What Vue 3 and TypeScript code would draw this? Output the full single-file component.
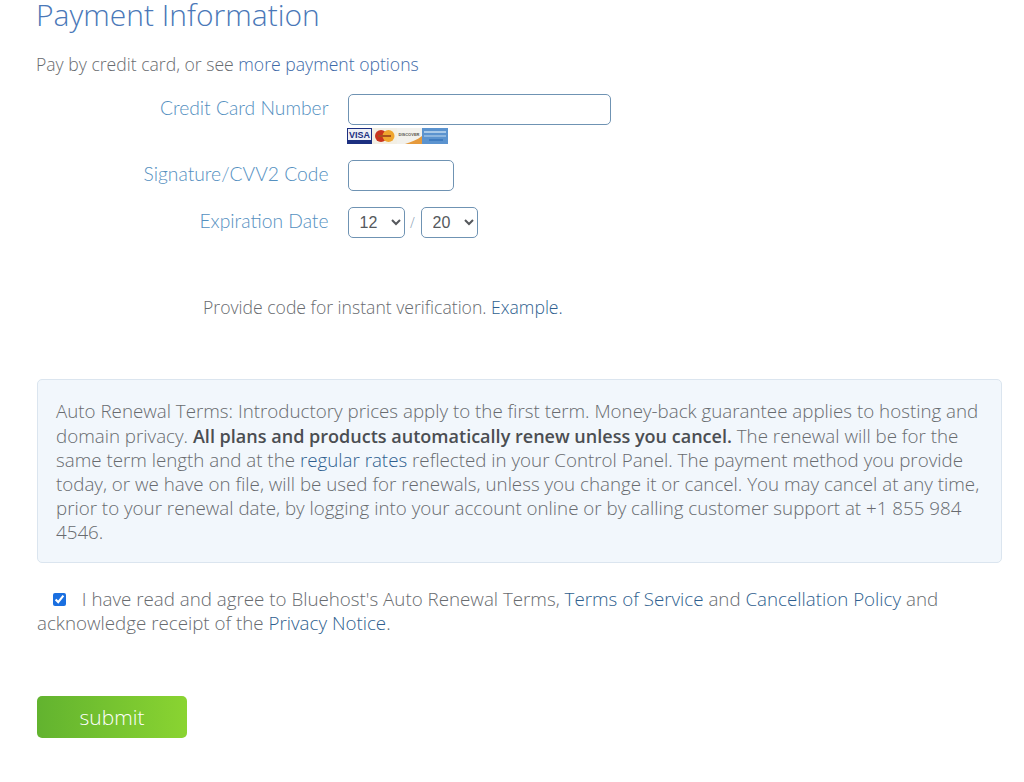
<template>
  <div class="page">
    <h2 class="title">Payment Information</h2>
    <p class="intro">Pay by credit card, or see <a href="#">more payment options</a></p>

    <form class="fields" @submit.prevent>
      <div class="row row-card">
        <label class="label" for="cc">Credit Card Number</label>
        <div class="control">
          <input id="cc" v-model="cardNumber" class="input input-long" type="text" />
          <svg class="cards" width="101" height="16" viewBox="0 0 101 16" aria-hidden="true">
            <rect width="25" height="16" fill="#1c2f80" />
            <rect x="1" y="1" width="23" height="11" fill="#eef0f6" />
            <text x="12.5" y="10.2" text-anchor="middle" class="visa">VISA</text>
            <rect x="25" width="25" height="16" fill="#f3efe4" />
            <circle cx="34" cy="8" r="6" fill="#c9341f" />
            <circle cx="41.5" cy="8" r="6" fill="#efa52e" />
            <rect x="31" y="7" width="13" height="2" fill="#a8521e" />
            <rect x="50" width="25" height="16" fill="#f2f1ec" />
            <text x="62" y="7.5" text-anchor="middle" class="discover">DISCOVER</text>
            <path d="M58 16 C64 14 70 12 75 8 V16 Z" fill="#e69a3c" />
            <rect x="75" width="26" height="16" fill="#5b93cf" />
            <rect x="77" y="3" width="22" height="2" fill="#a9c9e8" />
            <rect x="77" y="7" width="22" height="2" fill="#8db6df" />
            <rect x="82" y="11" width="14" height="2" fill="#3f7cc0" />
          </svg>
        </div>
      </div>
      <div class="row row-cvv">
        <label class="label" for="cvv">Signature/CVV2 Code</label>
        <div class="control">
          <input id="cvv" v-model="cvv" class="input input-short" type="text" />
        </div>
      </div>
      <div class="row row-exp">
        <label class="label" for="month">Expiration Date</label>
        <div class="control control-inline">
          <select id="month" v-model="month" class="select">
            <option v-for="m in months" :key="m" :value="m">{{ m }}</option>
          </select>
          <span class="slash">/</span>
          <select v-model="year" class="select">
            <option v-for="y in years" :key="y" :value="y">{{ y }}</option>
          </select>
        </div>
      </div>
    </form>

    <p class="verify">Provide code for instant verification. <a href="#">Example.</a></p>

    <div class="terms">
      Auto Renewal Terms: Introductory prices apply to the first term. Money-back guarantee applies to hosting and
      domain privacy. <strong>All plans and products automatically renew unless you cancel.</strong> The renewal will be for the
      same term length and at the <a href="#">regular rates</a> reflected in your Control Panel. The payment method you provide
      today, or we have on file, will be used for renewals, unless you change it or cancel. You may cancel at any time,
      prior to your renewal date, by logging into your account online or by calling customer support at +1 855 984
      4546.
    </div>

    <p class="agree">
      <input v-model="agreed" class="check" type="checkbox" />
      I have read and agree to Bluehost's Auto Renewal Terms, <a href="#">Terms of Service</a> and
      <a href="#">Cancellation Policy</a> and acknowledge receipt of the <a href="#">Privacy Notice</a>.
    </p>

    <button class="submit" type="button">submit</button>
  </div>
</template>

<script setup lang="ts">
import { ref } from 'vue';

const cardNumber = ref<string>('');
const cvv = ref<string>('');
const month = ref<string>('12');
const year = ref<string>('20');
const agreed = ref<boolean>(true);

const months: string[] = ['01', '02', '03', '04', '05', '06', '07', '08', '09', '10', '11', '12'];
const years: string[] = ['20', '21', '22', '23', '24', '25'];
</script>

<style>
html,
body {
  background: #ffffff;
}
</style>

<style scoped>
.page {
  height: 782px;
  box-sizing: border-box;
  padding: 0 22px 0 37px;
  overflow: hidden;
  font-family: "Open Sans", sans-serif;
  font-weight: 300;
  font-size: 17.6px;
  line-height: 24.2px;
  color: #686b6f;
}

a {
  color: #2f5f8f;
  text-decoration: none;
}

.title {
  margin: 0 0 0 -1px;
  font-size: 30px;
  line-height: 30px;
  font-weight: 300;
  color: #4a78b8;
}

.intro {
  margin: 22px 0 0 -1px;
}

.intro a {
  color: #3e6aa8;
}

.fields {
  margin-top: 18px;
}

.row {
  display: flex;
  align-items: flex-start;
}

.row-cvv {
  margin-top: 16px;
}

.row-exp {
  margin-top: 16px;
}

.label {
  width: 310.5px;
  padding-right: 19px;
  box-sizing: border-box;
  text-align: right;
  font-family: "Lato", sans-serif;
  font-weight: 300;
  font-size: 19.3px;
  line-height: 28px;
  color: #5590bf;
}

.control {
  display: flex;
  flex-direction: column;
  align-items: flex-start;
}

.control-inline {
  flex-direction: row;
  align-items: center;
}

.input {
  box-sizing: border-box;
  height: 31px;
  padding: 0 8px;
  background: #fff;
  border: 1px solid #6f93b3;
  border-radius: 5px;
  outline: none;
}

.input-long {
  width: 263px;
}

.input-short {
  width: 106px;
}

.cards {
  display: block;
  margin: 3px 0 0 -1px;
}

.visa {
  font-family: "Liberation Sans", sans-serif;
  font-size: 9px;
  font-weight: 700;
  fill: #1c2f80;
}

.discover {
  font-family: "Liberation Sans", sans-serif;
  font-size: 4px;
  font-weight: 700;
  fill: #55534e;
}

.select {
  box-sizing: border-box;
  width: 57px;
  height: 31px;
  padding: 0 0 0 7px;
  background: #fff;
  border: 1px solid #6f93b3;
  border-radius: 5px;
  font-family: "Liberation Sans", sans-serif;
  font-size: 16px;
  color: #55585c;
  outline: none;
}

.slash {
  width: 16px;
  text-align: center;
  font-size: 14px;
  color: #8aa0b5;
}

.verify {
  margin: 57px 0 0 166px;
}

.terms {
  margin-top: 60px;
  padding: 19px 18px 17px;
  background: #f2f7fc;
  border: 1px solid #dbe5ef;
  border-radius: 5px;
  font-size: 18.75px;
}

.terms strong {
  font-size: 18.05px;
  font-weight: 600;
  color: #4b4e52;
}

.agree {
  margin: 24px 0 0;
  font-size: 18.75px;
}

.check {
  width: 13px;
  height: 13px;
  margin: 0 11px 0 16px;
  accent-color: #1a6fe0;
}

.submit {
  display: block;
  width: 150px;
  height: 42px;
  margin-top: 61px;
  padding: 0;
  border: none;
  border-radius: 5px;
  background: linear-gradient(90deg, #62b32f, #8ad431);
  font-family: "Open Sans", sans-serif;
  font-weight: 300;
  font-size: 21px;
  color: #ffffff;
}
</style>
